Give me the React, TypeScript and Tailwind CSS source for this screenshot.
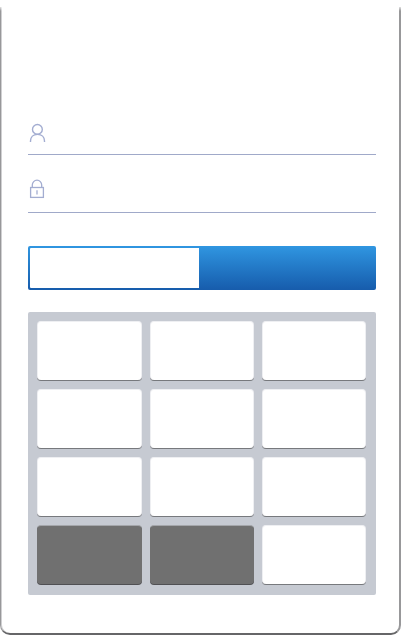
import React from "react";

const strokeColor = "#a3add1";

function UserIcon() {
  return (
    <svg width="18" height="21" viewBox="0 0 18 21" fill="none" stroke={strokeColor} strokeWidth="1.4">
      <circle cx="9.4" cy="7.4" r="4.9" />
      <path d="M2.5 20v-.9c0-3.8 2.7-6.7 7-6.7s7 2.9 7 6.7v.9" />
    </svg>
  );
}

function LockIcon() {
  return (
    <svg width="18" height="20" viewBox="0 0 18 20" fill="none" stroke={strokeColor} strokeWidth="1.3">
      <rect x="2.6" y="8.5" width="12.8" height="9.9" />
      <path d="M4.3 8.5V6.1a4.7 4.9 0 0 1 9.4 0v2.4M9 11.2v4.4" />
    </svg>
  );
}

function Key({ dark = false }: { dark?: boolean }) {
  return (
    <div
      className={
        dark
          ? "h-[59px] rounded border-t border-[#a4a6aa] bg-[#707070] shadow-[0_1px_0_#505053]"
          : "h-[59px] rounded border-x border-t border-[#eeeff2] bg-white shadow-[0_1px_0_#77797d]"
      }
    />
  );
}

export default function App() {
  return (
    <div className="h-[635px] w-[401px] overflow-hidden bg-white pt-[7px]">
      <main className="relative h-[628px] rounded-b-[10px] border-b-2 border-l border-r-2 border-b-[#666668] border-l-[#98989a] border-r-[#98989a] bg-white pl-[27px] pr-[23px] shadow-[inset_1px_0_0_#d0d0d2]">
        <div className="absolute -left-px -right-0.5 top-0 h-1 bg-linear-to-b from-white/70 to-transparent" />
        <div className="h-[148px] border-b border-[#a0a9c9] pt-[115px]">
          <UserIcon />
        </div>
        <div className="h-[58px] border-b border-[#a0a9c9] pt-[24px]">
          <LockIcon />
        </div>
        <div className="mt-[33px] h-11 rounded-[2px] bg-linear-to-b from-[#3096e1] to-[#175cac] py-0.5 pl-0.5">
          <div className="h-10 w-[169px] rounded-l-[1px] bg-white" />
        </div>
        <div className="mt-[22px] grid h-[283px] grid-cols-3 content-start gap-x-2 gap-y-[9px] rounded-[2px] bg-[#c6cad2] pl-[9.4px] pr-[9.6px] pt-[9px]">
          {Array.from({ length: 12 }, (_, i) => (
            <Key key={i} dark={i === 9 || i === 10} />
          ))}
        </div>
      </main>
    </div>
  );
}
